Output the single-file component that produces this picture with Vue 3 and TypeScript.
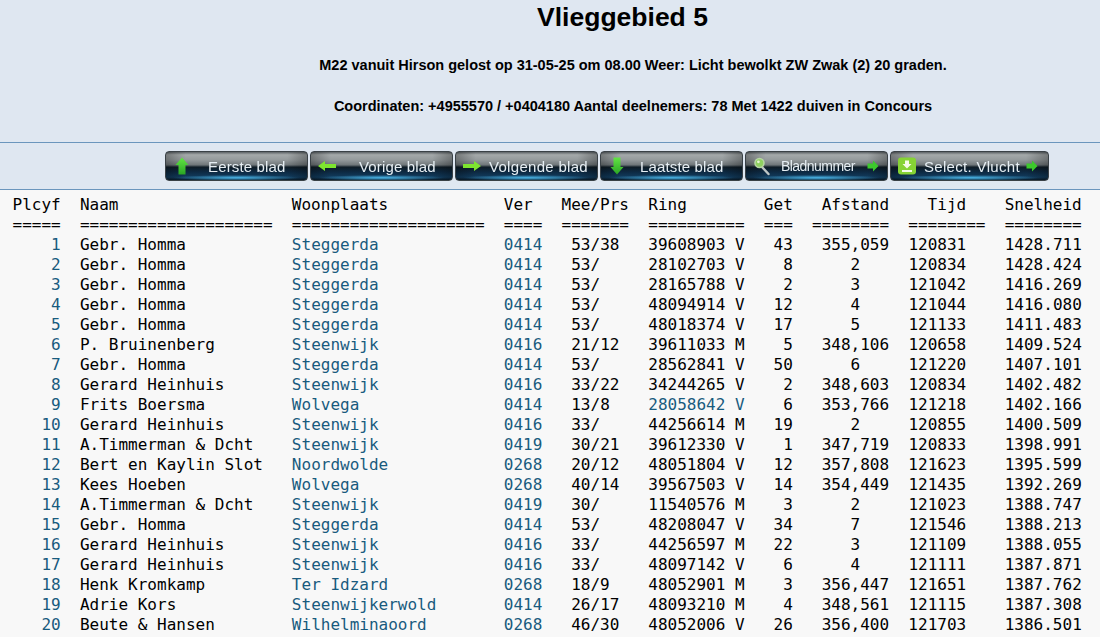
<script setup lang="ts">
interface Row { naam: string; plaats: string; ver: string; mp: string; ring: string; sex: string; get: number; afst: string; tijd: string; snel: string; link: boolean }

const raw: [string, string, string, string, string, string, number, string, string, string][] = [
  ['Gebr. Homma', 'Steggerda', '0414', '53/38', '39608903', 'V', 43, '355,059', '120831', '1428.711'],
  ['Gebr. Homma', 'Steggerda', '0414', '53/', '28102703', 'V', 8, '2', '120834', '1428.424'],
  ['Gebr. Homma', 'Steggerda', '0414', '53/', '28165788', 'V', 2, '3', '121042', '1416.269'],
  ['Gebr. Homma', 'Steggerda', '0414', '53/', '48094914', 'V', 12, '4', '121044', '1416.080'],
  ['Gebr. Homma', 'Steggerda', '0414', '53/', '48018374', 'V', 17, '5', '121133', '1411.483'],
  ['P. Bruinenberg', 'Steenwijk', '0416', '21/12', '39611033', 'M', 5, '348,106', '120658', '1409.524'],
  ['Gebr. Homma', 'Steggerda', '0414', '53/', '28562841', 'V', 50, '6', '121220', '1407.101'],
  ['Gerard Heinhuis', 'Steenwijk', '0416', '33/22', '34244265', 'V', 2, '348,603', '120834', '1402.482'],
  ['Frits Boersma', 'Wolvega', '0414', '13/8', '28058642', 'V', 6, '353,766', '121218', '1402.166'],
  ['Gerard Heinhuis', 'Steenwijk', '0416', '33/', '44256614', 'M', 19, '2', '120855', '1400.509'],
  ['A.Timmerman & Dcht', 'Steenwijk', '0419', '30/21', '39612330', 'V', 1, '347,719', '120833', '1398.991'],
  ['Bert en Kaylin Slot', 'Noordwolde', '0268', '20/12', '48051804', 'V', 12, '357,808', '121623', '1395.599'],
  ['Kees Hoeben', 'Wolvega', '0268', '40/14', '39567503', 'V', 14, '354,449', '121435', '1392.269'],
  ['A.Timmerman & Dcht', 'Steenwijk', '0419', '30/', '11540576', 'M', 3, '2', '121023', '1388.747'],
  ['Gebr. Homma', 'Steggerda', '0414', '53/', '48208047', 'V', 34, '7', '121546', '1388.213'],
  ['Gerard Heinhuis', 'Steenwijk', '0416', '33/', '44256597', 'M', 22, '3', '121109', '1388.055'],
  ['Gerard Heinhuis', 'Steenwijk', '0416', '33/', '48097142', 'V', 6, '4', '121111', '1387.871'],
  ['Henk Kromkamp', 'Ter Idzard', '0268', '18/9', '48052901', 'M', 3, '356,447', '121651', '1387.762'],
  ['Adrie Kors', 'Steenwijkerwold', '0414', '26/17', '48093210', 'M', 4, '348,561', '121115', '1387.308'],
  ['Beute & Hansen', 'Wilhelminaoord', '0268', '46/30', '48052006', 'V', 26, '356,400', '121703', '1386.501'],
]

const rows: Row[] = raw.map((r) => ({
  naam: r[0].padEnd(20), plaats: r[1], ver: r[2], mp: r[3], ring: r[4], sex: r[5], get: r[6], afst: r[7], tijd: r[8], snel: r[9],
  link: r[4] === '28058642',
}))

const pl = (n: number) => String(n).padStart(5)
const gapPlaats = (p: string) => ' '.repeat(22 - p.length)
const mee = (m: string) => (' ' + m).padEnd(9)
const afstand = (a: string) => (a.length > 1 ? a : '   ' + a).padEnd(7)
const tail = (r: Row) => String(r.get).padStart(5) + '   ' + afstand(r.afst) + '  ' + r.tijd + '    ' + r.snel

const header = 'Plcyf  Naam                  Woonplaats            Ver   Mee/Prs  Ring        Get   Afstand    Tijd    Snelheid'
const rule = '=====  ====================  ====================  ====  =======  ==========  ===  ========  ========  ========'

const buttons = [
  { label: 'Eerste blad', icon: 'up' },
  { label: 'Vorige blad', icon: 'left' },
  { label: 'Volgende blad', icon: 'right' },
  { label: 'Laatste blad', icon: 'down' },
  { label: 'Bladnummer', icon: 'search', more: true },
  { label: 'Select. Vlucht', icon: 'save', more: true },
]
</script>

<template>
  <div class="page">
    <header class="top">
      <h1>Vlieggebied 5</h1>
      <p class="l1">M22 vanuit Hirson gelost op 31-05-25 om 08.00 Weer: Licht bewolkt ZW Zwak (2) 20 graden.</p>
      <p class="l2">Coordinaten: +4955570 / +0404180 Aantal deelnemers: 78 Met 1422 duiven in Concours</p>
    </header>
    <nav class="bar">
      <a v-for="b in buttons" :key="b.label" class="btn" :class="'b-' + b.icon" href="#">
        <svg class="ic" viewBox="0 0 20 20" width="20" height="20">
          <defs>
            <linearGradient :id="'g-' + b.icon" x1="0" y1="0" x2="0" y2="1">
              <stop offset="0" stop-color="#62e544" />
              <stop offset="1" stop-color="#2aa524" />
            </linearGradient>
          </defs>
          <path v-if="b.icon === 'up'" d="M10 1.5 L16.5 9 H13.5 V18.5 H6.5 V9 H3.5 Z" :fill="'url(#g-' + b.icon + ')'" />
          <path v-else-if="b.icon === 'down'" d="M10 18.5 L16.5 11 H13.5 V1.5 H6.5 V11 H3.5 Z" :fill="'url(#g-' + b.icon + ')'" />
          <path v-else-if="b.icon === 'left'" d="M1 10 L8 5 V8 H19 V12 H8 V15 Z" fill="#7ee52f" />
          <path v-else-if="b.icon === 'right'" d="M19 10 L12 5 V8 H1 V12 H12 V15 Z" fill="#7ee52f" />
          <g v-else-if="b.icon === 'search'">
            <path d="M10 11 L16.5 18" stroke="#bfc6c6" stroke-width="2.4" stroke-linecap="round" />
            <circle cx="7.5" cy="7" r="4.5" fill="#8fd060" stroke="#b5d4a2" stroke-width="1.6" />
            <circle cx="6.4" cy="5.8" r="1.4" fill="#e4f4d0" />
          </g>
          <g v-else>
            <rect x="1" y="1.5" width="18" height="17" rx="3" fill="#86d335" />
            <path d="M10 12.5 L14.5 8 H12 V4.5 H8 V8 H5.5 Z M5 14 H15 V16 H5 Z" fill="#f4fbe8" />
          </g>
        </svg>
        <span class="lbl">{{ b.label }}</span>
        <svg v-if="b.more" class="more" viewBox="0 0 12 12" width="12" height="12">
          <path d="M11.5 6 L6 0.5 V3.5 H0.5 V8.5 H6 V11.5 Z" fill="#3cc92c" />
        </svg>
      </a>
    </nav>
    <pre class="list"><span>{{ header }}</span>
<span>{{ rule }}</span>
<template v-for="(r, i) in rows" :key="i"><a class="lk" href="#">{{ pl(i + 1) }}</a>  {{ r.naam }}  <a class="lk" href="#">{{ r.plaats }}</a>{{ gapPlaats(r.plaats) }}<a class="lk" href="#">{{ r.ver }}</a>  {{ mee(r.mp) }}<a v-if="r.link" class="lk" href="#">{{ r.ring }} {{ r.sex }}</a><template v-else>{{ r.ring }} {{ r.sex }}</template>{{ tail(r) }}
</template></pre>
  </div>
</template>

<style>
html, body { margin: 0; background: #f8f8f8; overflow: hidden; }
</style>

<style scoped>
.page { width: 1100px; height: 637px; overflow: hidden; background: #f8f8f8; font-family: "Liberation Sans", Arial, sans-serif; }
.top { height: 142px; background: #dfe7f1; border-bottom: 1px solid #6b96bd; padding-left: 166px; text-align: center; color: #000; overflow: hidden; }
.top h1 { margin: 2px 0 0; font-size: 26.5px; line-height: 30px; font-weight: bold; padding-right: 21px; }
.top p { margin: 0; font-size: 14.5px; line-height: 16px; font-weight: bold; }
.l1 { padding-top: 25px; }
.l2 { padding-top: 25px; }
.bar { background: #dfe7f1; border-bottom: 1px solid #6b96bd; display: flex; gap: 2px; padding: 8px 0 0 165px; box-sizing: border-box; height: 47px; }
.btn { position: relative; width: 143px; height: 30px; box-sizing: border-box; display: flex; align-items: center; border: 1px solid #3a4146; border-radius: 4px; text-decoration: none; color: #e6eef3; font-size: 15px; letter-spacing: 0.15px; background: linear-gradient(90deg, rgba(0,0,0,.28), rgba(0,0,0,0) 14%, rgba(0,0,0,0) 86%, rgba(0,0,0,.28)), radial-gradient(ellipse 45% 10% at 50% 92%, #49b4e6 0%, rgba(63,160,216,0) 100%), linear-gradient(#5d6367 0%, #a4a9aa 10%, #949a9c 28%, #70777a 46%, #0e1c26 54%, #0d2a44 72%, #123c5e 90%, #0a1c2b 100%); }
.b-save { width: 159px; }
.ic { flex: none; margin-left: 6px; }
.lbl { white-space: nowrap; filter: blur(0.3px); }
.b-up .lbl { margin-left: 16px; }
.b-left .lbl { margin-left: 22px; }
.b-right .lbl { margin-left: 7px; letter-spacing: 0.3px; }
.b-down .lbl { margin-left: 13px; }
.b-search .lbl { margin-left: 9px; font-size: 14px; letter-spacing: -0.55px; }
.b-save .lbl { margin-left: 7px; letter-spacing: 0.3px; }
.more { flex: none; margin-left: auto; margin-right: 8px; }
.b-save .more { margin-right: 10px; }
.list { margin: 0; padding: 5px 0 0 12.5px; font-family: "DejaVu Sans Mono", monospace; font-size: 16px; line-height: 20px; color: #000; }
.lk { color: #185b7e; text-decoration: none; }
</style>
